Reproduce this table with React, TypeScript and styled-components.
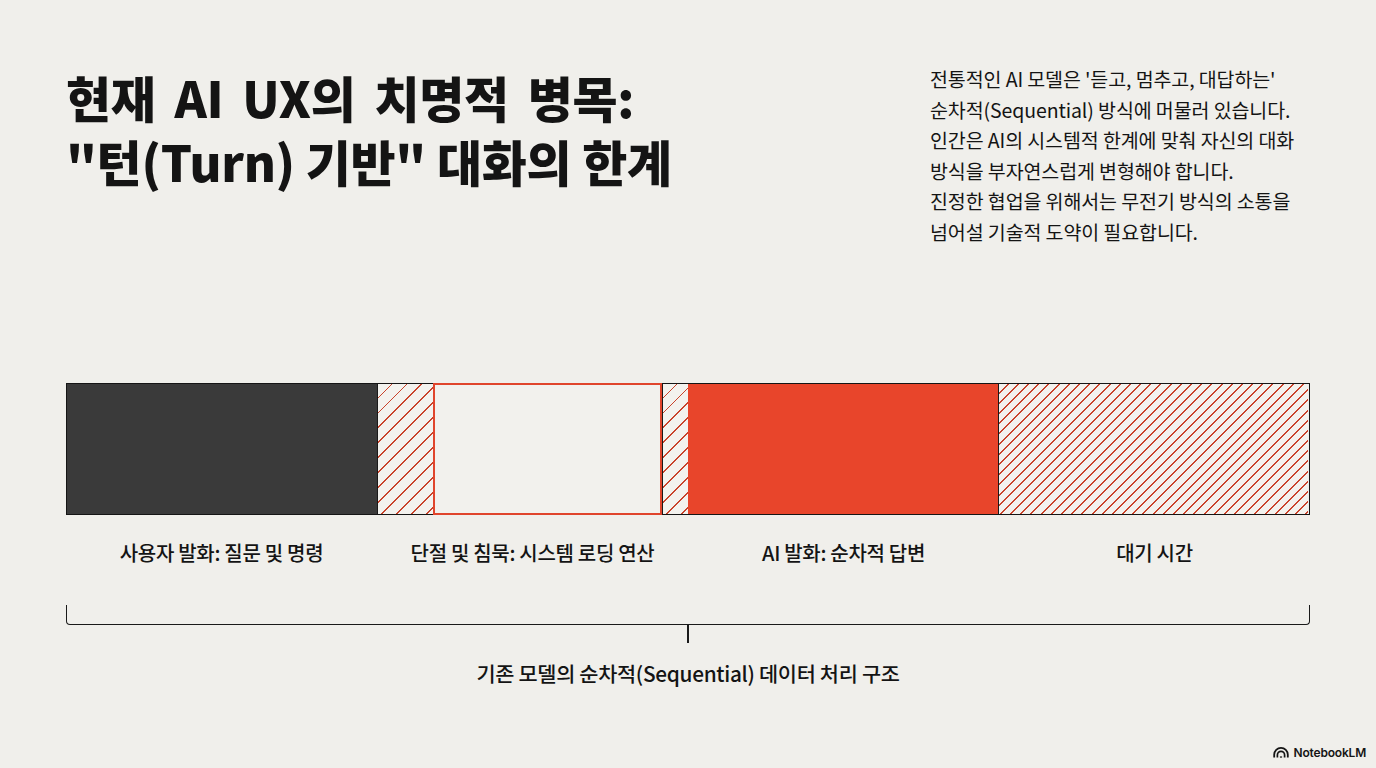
import React from "react";
import styled, { createGlobalStyle } from "styled-components";

const GlobalStyle = createGlobalStyle`
  html, body {
    margin: 0;
    padding: 0;
    background: #f0efeb;
  }
  body {
    font-family: "Noto Sans CJK KR", "Noto Sans", "Liberation Sans", sans-serif;
    color: #141414;
  }
`;

const Page = styled.div`
  width: 1376px;
  height: 768px;
  box-sizing: border-box;
  padding: 64px 66px 8px;
  display: flex;
  flex-direction: column;
  overflow: hidden;
`;

const Header = styled.header`
  display: flex;
  justify-content: space-between;
  align-items: flex-start;
`;

const Title = styled.h1`
  margin: 1px 0 0;
  font-size: 49px;
  font-weight: 900;
  line-height: 64px;
  letter-spacing: -0.3px;
  white-space: nowrap;
`;

const TitleLine = styled.span<{ $spread?: number }>`
  display: block;
  word-spacing: ${(p) => p.$spread ?? 0}px;
`;

const Intro = styled.p`
  margin: 0 -8px 0 0;
  width: 388px;
  font-size: 19.5px;
  font-weight: 400;
  line-height: 30.5px;
  letter-spacing: -0.1px;
  white-space: nowrap;
`;

const Bar = styled.div`
  margin-top: 136px;
  height: 132px;
  display: flex;
  border: 1.5px solid #151515;
  box-sizing: border-box;
`;

const Segment = styled.div<{ $width: number; $fill?: string }>`
  flex: 0 0 ${(p) => p.$width}px;
  background: ${(p) => p.$fill ?? "transparent"};
  box-sizing: border-box;
`;

const Hatch = styled.div<{ $width: number; $gap: number }>`
  flex: 0 0 ${(p) => p.$width}px;
  box-sizing: border-box;
  background: repeating-linear-gradient(
    135deg,
    #f3f2ee 0px,
    #f3f2ee ${(p) => p.$gap - 1.4}px,
    #c9432b ${(p) => p.$gap - 1.4}px,
    #c9432b ${(p) => p.$gap}px
  );
  border-left: 1px solid #1a1a1a;
`;

const Gap = styled.div`
  flex: 0 0 229px;
  border: 2px solid #e0452c;
  background: #f2f1ed;
  box-sizing: border-box;
  margin: -1px 0;
`;

const Labels = styled.div`
  margin-top: 26px;
  display: grid;
  grid-template-columns: repeat(4, 1fr);
`;

const Label = styled.div`
  text-align: center;
  font-size: 20px;
  font-weight: 500;
  line-height: 24px;
  letter-spacing: -0.3px;
`;

const Brace = styled.div`
  margin-top: 40px;
  height: 20px;
  border: 1.5px solid #1a1a1a;
  border-top: none;
  border-radius: 0 0 4px 4px;
  box-sizing: border-box;
`;

const BraceTick = styled.div`
  align-self: center;
  width: 1.5px;
  height: 18px;
  background: #1a1a1a;
`;

const Caption = styled.div`
  margin-top: 18px;
  text-align: center;
  font-size: 20.8px;
  font-weight: 500;
  line-height: 24px;
  letter-spacing: -0.3px;
`;

const Brand = styled.div`
  margin-top: auto;
  margin-right: -56px;
  align-self: flex-end;
  display: flex;
  align-items: center;
  gap: 5px;
  height: 16px;
  font-family: "Inter", "Liberation Sans", sans-serif;
  font-size: 12px;
  font-weight: 600;
  letter-spacing: -0.2px;
  color: #151515;
`;

const BrandMark = () => (
  <svg width="16" height="12" viewBox="0 0 16 12" fill="none">
    <path
      d="M1.2 11.5 V8.6 A6.8 6.8 0 0 1 14.8 8.6 V11.5"
      stroke="#151515"
      strokeWidth="1.8"
    />
    <path
      d="M4.4 11.5 V9 A3.6 3.6 0 0 1 11.6 9 V11.5"
      stroke="#151515"
      strokeWidth="1.7"
    />
    <path d="M7.3 11.5 A0.8 0.8 0 0 1 8.7 11.5" stroke="#151515" strokeWidth="1.6" />
  </svg>
);

const App = () => {
  return (
    <>
      <GlobalStyle />
      <Page>
        <Header>
          <Title>
            <TitleLine $spread={8}>현재 AI UX의 치명적 병목:</TitleLine>
            <TitleLine>"턴(Turn) 기반" 대화의 한계</TitleLine>
          </Title>
          <Intro>
            전통적인 AI 모델은 '듣고, 멈추고, 대답하는'
            <br />
            순차적(Sequential) 방식에 머물러 있습니다.
            <br />
            인간은 AI의 시스템적 한계에 맞춰 자신의 대화
            <br />
            방식을 부자연스럽게 변형해야 합니다.
            <br />
            진정한 협업을 위해서는 무전기 방식의 소통을
            <br />
            넘어설 기술적 도약이 필요합니다.
          </Intro>
        </Header>

        <Bar>
          <Segment $width={310} $fill="#3a3a3a" />
          <Hatch $width={56} $gap={10.6} />
          <Gap />
          <Hatch $width={26} $gap={10.6} />
          <Segment $width={310} $fill="#e8452b" />
          <Hatch $width={310} $gap={7.2} />
        </Bar>

        <Labels>
          <Label>사용자 발화: 질문 및 명령</Label>
          <Label>단절 및 침묵: 시스템 로딩 연산</Label>
          <Label>AI 발화: 순차적 답변</Label>
          <Label>대기 시간</Label>
        </Labels>

        <Brace />
        <BraceTick />
        <Caption>기존 모델의 순차적(Sequential) 데이터 처리 구조</Caption>

        <Brand>
          <BrandMark />
          NotebookLM
        </Brand>
      </Page>
    </>
  );
};

export default App;
